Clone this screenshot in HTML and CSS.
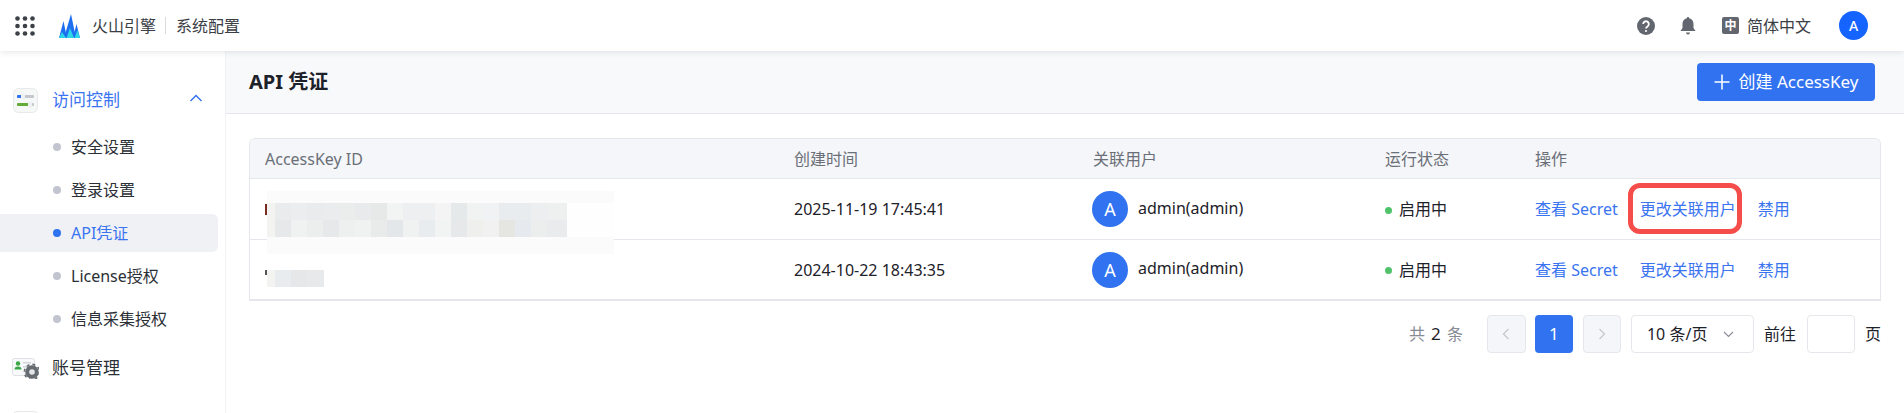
FILE: index.html
```html
<!DOCTYPE html>
<html lang="zh-CN">
<head>
<meta charset="utf-8">
<title>API 凭证</title>
<link rel="stylesheet" href="styles.css">
</head>
<body>
<header class="topbar">
  <div class="topbar-left">
    <svg class="apps" width="20" height="20" viewBox="0 0 20 20"><g fill="#3c4148"><circle cx="2.500" cy="2.500" r="2.300"/><circle cx="10" cy="2.500" r="2.300"/><circle cx="17.500" cy="2.500" r="2.300"/><circle cx="2.500" cy="10" r="2.300"/><circle cx="10" cy="10" r="2.300"/><circle cx="17.500" cy="10" r="2.300"/><circle cx="2.500" cy="17.500" r="2.300"/><circle cx="10" cy="17.500" r="2.300"/><circle cx="17.500" cy="17.500" r="2.300"/></g></svg>
    <svg class="logo" width="21" height="24" viewBox="0 0 21 24"><path d="M0 24 L4.500 7 L8 24Z" fill="#1d6ff0"/><path d="M5 24 L12 0 L17 24Z" fill="#1d6ff0"/><path d="M14 24 L17.500 10 L21 24Z" fill="#1d6ff0"/><path d="M0 24 L3 18 L7 24Z" fill="#2fd6e8"/><path d="M7.500 24 L11 14 L15 24Z" fill="#2fd6e8"/><path d="M15.500 24 L18.500 16 L21 24Z" fill="#2fd6e8"/></svg>
    <span class="brand">火山引擎</span>
    <span class="brand-sep"></span>
    <span class="brand-sub">系统配置</span>
  </div>
  <div class="topbar-right">
    <svg class="help" width="18" height="18" viewBox="0 0 18 18"><circle cx="9" cy="9" r="9" fill="#62676f"/><path d="M6.200 7a2.800 2.800 0 1 1 4.300 2.400c-1 .6-1.500 1-1.500 2" fill="none" stroke="#fff" stroke-width="1.800"/><circle cx="9" cy="14" r="1.100" fill="#fff"/></svg>
    <svg class="bell" width="16" height="18" viewBox="0 0 16 18"><path d="M8 0a1.200 1.200 0 0 1 1.200 1.300C12 2 13.500 4.200 13.500 7v4l2 3H.5l2-3V7c0-2.800 1.500-5 4.300-5.700A1.200 1.200 0 0 1 8 0z" fill="#62676f"/><path d="M6 15.500h4a2 2 0 0 1-4 0z" fill="#62676f"/></svg>
    <span class="lang"><span class="lang-icon">中</span>简体中文</span>
    <span class="user-badge">A</span>
  </div>
</header>
<div class="shell">
  <aside class="sidebar">
    <div class="nav-group nav-group-open">
      <svg class="nav-icon" width="25" height="25" viewBox="0 0 25 25"><rect x=".5" y=".5" width="24" height="24" rx="5" fill="#f6f7f7" stroke="#e8e9eb"/><rect x="4" y="7" width="17" height="3" rx="1" fill="#c4c7cb"/><rect x="4" y="7" width="6" height="3" rx="1" fill="#2f73f0"/><rect x="8" y="5.500" width="4" height="6" rx="1" fill="#eef0f3"/><rect x="4" y="15" width="17" height="3" rx="1" fill="#c4c7cb"/><rect x="4" y="15" width="12" height="3" rx="1" fill="#62ab3b"/><rect x="15" y="13.500" width="4" height="6" rx="1" fill="#eef0f3"/></svg>
      <span class="nav-label">访问控制</span>
      <svg class="nav-caret" width="14" height="8" viewBox="0 0 14 8"><path d="M1.500 7L7 1.500 12.500 7" fill="none" stroke="#3a74f0" stroke-width="1.500"/></svg>
    </div>
    <ul class="subnav">
      <li class="subnav-item"><span class="dot"></span>安全设置</li>
      <li class="subnav-item"><span class="dot"></span>登录设置</li>
      <li class="subnav-item subnav-item-active"><span class="dot"></span>API凭证</li>
      <li class="subnav-item"><span class="dot"></span>License授权</li>
      <li class="subnav-item"><span class="dot"></span>信息采集授权</li>
    </ul>
    <div class="nav-group">
      <svg class="nav-icon-wide" width="27" height="21" viewBox="0 0 27 21"><rect x=".5" y=".5" width="22" height="17" rx="2" fill="#f8f9fa" stroke="#dfe1e4"/><circle cx="6" cy="5.500" r="2.200" fill="#39a845"/><path d="M2.500 11.500a3.500 3 0 0 1 7 0z" fill="#39a845"/><rect x="11" y="4" width="8" height="1.500" fill="#d2d5d9"/><rect x="11" y="8" width="6" height="1.500" fill="#d2d5d9"/><circle cx="20" cy="14" r="6.800" fill="#666b72"/><circle cx="20" cy="14" r="7.600" fill="none" stroke="#666b72" stroke-width="1.600" stroke-dasharray="3 3"/><circle cx="20" cy="14" r="2.800" fill="#e4e5e7"/></svg>
      <span class="nav-label nav-label-plain">账号管理</span>
    </div>
    <div class="nav-stub"></div>
  </aside>
  <main class="content">
    <div class="page-head">
      <h1 class="page-title">API 凭证</h1>
      <button class="btn-primary"><svg width="16" height="16" viewBox="0 0 16 16"><path d="M8 .5v15M.5 8h15" stroke="#fff" stroke-width="1.500" fill="none"/></svg>创建 AccessKey</button>
    </div>
    <div class="page-body">
      <div class="table">
        <div class="row row-head">
          <div class="cell">AccessKey ID</div>
          <div class="cell">创建时间</div>
          <div class="cell">关联用户</div>
          <div class="cell">运行状态</div>
          <div class="cell">操作</div>
        </div>
        <div class="row">
          <div class="cell cell-key">
            <span class="key-peek key-peek-red"></span>
            <span class="mosaic-haze"></span>
            <span class="mosaic mosaic-long"></span>
          </div>
          <div class="cell">2025-11-19 17:45:41</div>
          <div class="cell cell-user"><span class="avatar">A</span><span class="user-name">admin(admin)</span></div>
          <div class="cell"><span class="status-dot"></span>启用中</div>
          <div class="cell cell-ops"><a class="link">查看 Secret</a><a class="link link-marked">更改关联用户</a><a class="link">禁用</a></div>
        </div>
        <div class="row">
          <div class="cell cell-key">
            <span class="key-peek"></span>
            <span class="mosaic mosaic-short"></span>
          </div>
          <div class="cell">2024-10-22 18:43:35</div>
          <div class="cell cell-user"><span class="avatar">A</span><span class="user-name">admin(admin)</span></div>
          <div class="cell"><span class="status-dot"></span>启用中</div>
          <div class="cell cell-ops"><a class="link">查看 Secret</a><a class="link">更改关联用户</a><a class="link">禁用</a></div>
        </div>
      </div>
      <div class="pager">
        <span class="pager-total">共 <b>2</b> 条</span>
        <span class="pg pg-disabled pg-prev"><svg width="8" height="12" viewBox="0 0 8 12"><path d="M6.500 1L1.500 6l5 5" fill="none" stroke="#c4c7cd" stroke-width="1.200"/></svg></span>
        <span class="pg pg-current">1</span>
        <span class="pg pg-disabled pg-next"><svg width="8" height="12" viewBox="0 0 8 12"><path d="M1.500 1l5 5-5 5" fill="none" stroke="#c4c7cd" stroke-width="1.200"/></svg></span>
        <span class="pg-size">10 条/页<svg width="11" height="7" viewBox="0 0 11 7"><path d="M1 1l4.500 4.500L10 1" fill="none" stroke="#8a8f97" stroke-width="1.200"/></svg></span>
        <span class="pg-goto">前往</span>
        <span class="pg-input"></span>
        <span class="pg-unit">页</span>
      </div>
    </div>
  </main>
</div>
</body>
</html>
```
FILE: styles.css
```css
* { box-sizing: border-box; }
html, body { margin: 0; height: 413px; overflow: hidden; }
body {
  font-family: "Noto Sans", "Noto Sans CJK SC", sans-serif;
  font-size: 16px;
  line-height: 22px;
  color: #1d2129;
  background: #fff;
}
.topbar {
  height: 51px;
  display: flex;
  align-items: center;
  justify-content: space-between;
  background: #fff;
  box-shadow: 0 1px 6px rgba(30, 40, 60, .12);
  position: relative;
  padding: 0 36px 0 15px;
}
.topbar-left, .topbar-right { display: flex; align-items: center; }
.logo { margin: 0 12px 0 24px; }
.brand, .brand-sub { font-size: 16px; color: #3a3e45; }
.brand-sep { width: 1px; height: 17px; background: #d8dade; margin: 0 10px 0 9px; }
.bell { margin-left: 25px; }
.lang { display: flex; align-items: center; margin-left: 26px; font-size: 16px; color: #3a3e45; }
.lang-icon {
  width: 17px; height: 17px; margin-right: 8px;
  background: #62676f; color: #fff; border-radius: 2px;
  font-size: 12px; font-weight: 700; line-height: 17px; text-align: center;
}
.user-badge {
  width: 29px; height: 29px; margin-left: 28px; border-radius: 50%;
  background: #1664ff; color: #fff; font-size: 14px; font-weight: 500;
  display: flex; align-items: center; justify-content: center;
}
.shell { display: flex; height: 362px; }
.sidebar {
  width: 226px; flex: none; padding-top: 33px;
  border-right: 1px solid #f1f2f5; overflow: hidden;
}
.nav-group { display: flex; align-items: center; height: 32px; padding: 0 22px 0 13px; }
.nav-label { margin-left: 14px; font-size: 17px; color: #3a74f0; }
.nav-label-plain { color: #2b2f36; margin-left: 13px; }
.nav-icon-wide { margin-left: -1px; margin-top: 1px; }
.nav-caret { margin-left: auto; margin-top: -4px; }
.subnav { list-style: none; margin: 12px 0 14px; padding: 0; }
.subnav-item {
  display: flex; align-items: center; height: 38px; margin-bottom: 5px;
  margin-right: 7px; padding-left: 53px; font-size: 16px; color: #2b2f36;
  border-radius: 0 6px 6px 0;
}
.subnav-item:last-child { margin-bottom: 0; }
.subnav-item-active { background: #f0f1f5; color: #3a74f0; }
.dot { width: 8px; height: 8px; border-radius: 50%; background: #c2c5cf; margin-right: 10px; }
.subnav-item-active .dot { background: #2f73f0; }
.nav-stub {
  width: 25px; height: 25px; margin: 27px 0 0 13px;
  border: 1px solid #e6e7e9; border-radius: 4px;
}
.content { flex: 1; min-width: 0; }
.page-head {
  height: 63px; display: flex; align-items: center; justify-content: space-between;
  padding: 0 29px 0 23px; background: #f8f9fb; border-bottom: 1px solid #e6e7ec;
}
.page-title { margin: 0; font-size: 20px; font-weight: 700; color: #1d2129; }
.btn-primary {
  height: 38px; width: 178px; padding: 0; border: 0; border-radius: 4px;
  background: #3172f0; color: #fff; font: inherit; font-size: 17px;
  display: flex; align-items: center; justify-content: center; gap: 9px;
}
.page-body { padding: 24px 23px 0 23px; }
.table {
  border: 1px solid #e6e7ec; border-bottom-width: 2px;
  border-radius: 6px 6px 0 0; overflow: hidden;
}
.row {
  display: grid; grid-template-columns: 529px 299px 292px 150px 1fr;
  height: 61px; align-items: center; border-top: 1px solid #e6e7ec;
}
.row:nth-child(3) { height: 60px; }
.row-head { height: 39px; border-top: 0; background: #f5f6f9; color: #6a6f78; }
.cell { padding-left: 15px; display: flex; align-items: center; min-width: 0; white-space: nowrap; }
.cell-key { position: relative; height: 100%; }
.key-peek { width: 2px; height: 11px; background: #7a2a20; }
.key-peek:not(.key-peek-red) { background: #555; height: 5px; margin-top: 6px; }
.mosaic { position: absolute; left: 17px; }
.mosaic-long {
  top: 24px; width: 300px; height: 34px; z-index: 2;
  background:
    linear-gradient(90deg, #f3f3f1 0 8px, #e9ebed 8px 24px, #ebedee 24px 40px, #e9ebed 40px 56px, #ebecee 56px 72px, #ebecec 72px 88px, #e9eaeb 88px 104px, #e7e9e9 104px 120px, #f1f4f2 120px 136px, #eeeff1 136px 152px, #eeeff0 152px 168px, #f3f4f3 168px 184px, #e6e9ea 184px 200px, #f1f2f2 200px 216px, #f1f2f3 216px 232px, #e9ecef 232px 248px, #e9ecee 248px 264px, #eceef0 264px 280px, #eeefef 280px 300px) top / 100% 50% no-repeat,
    linear-gradient(90deg, #f3f3f1 0 8px, #e6e8e9 8px 24px, #f0f2f1 24px 40px, #eceeee 40px 56px, #e6e8e9 56px 72px, #eef0ef 72px 88px, #f0f1f1 88px 104px, #e9ebeb 104px 120px, #e4e7ea 120px 136px, #f0f1f1 136px 152px, #e9ecef 152px 168px, #f2f3f3 168px 184px, #e6e8e9 184px 200px, #eff0ee 200px 216px, #f0f1f0 216px 232px, #e5e5e2 232px 248px, #e6e9ee 248px 264px, #eceded 264px 280px, #e9ebed 280px 300px) bottom / 100% 50% no-repeat;
}
.mosaic-short {
  top: 30px; width: 57px; height: 17px;
  background: linear-gradient(90deg, #f3f3f1 0 8px, #e9ecef 8px 24px, #e6e7e8 24px 40px, #e8e9ea 40px 57px);
}
.mosaic-haze {
  position: absolute; left: 17px; top: 12px; width: 347px; height: 63px; z-index: 1;
  background: linear-gradient(180deg, #fbfbfb 0 12px, #fefefe 12px 46px, #fbfbfb 46px 63px);
}
.cell-user { gap: 10px; }
.avatar {
  width: 36px; height: 36px; margin-left: -1px; border-radius: 50%; background: #3172f0; color: #fff;
  font-size: 18px; display: flex; align-items: center; justify-content: center;
}
.user-name { margin-top: -3px; }
.status-dot { width: 7px; height: 7px; border-radius: 50%; background: #50c26a; margin-right: 7px; margin-top: 2px; }
.cell-ops { gap: 22px; }
.link { color: #3a74f0; white-space: nowrap; position: relative; }
.link-marked::after {
  content: ""; position: absolute; left: -12px; right: -6px; top: -15px; bottom: -14px;
  border: 5px solid #f54d4a; border-radius: 12px;
}
.pager { display: flex; align-items: center; justify-content: flex-end; height: 38px; margin-top: 14px; }
.pager-total { color: #868b94; margin-right: 24px; word-spacing: 2px; }
.pager-total b { font-weight: 400; color: #1d2129; font-size: 17px; }
.pg {
  width: 38px; height: 38px; border-radius: 4px; display: flex; align-items: center; justify-content: center;
}
.pg-disabled { background: #f5f6f9; border: 1px solid #e6e7ec; }
.pg-prev { width: 39px; }
.pg-current { background: #3172f0; color: #fff; margin: 0 10px 0 9px; font-size: 17px; }
.pg-size {
  width: 123px; height: 38px; margin-left: 10px; border: 1px solid #e6e7ec; border-radius: 4px;
  display: flex; align-items: center; justify-content: space-between; padding: 0 19px 0 15px;
}
.pg-goto { margin: 0 11px 0 10px; }
.pg-input { width: 48px; height: 38px; border: 1px solid #e6e7ec; border-radius: 4px; }
.pg-unit { margin-left: 10px; }
```
